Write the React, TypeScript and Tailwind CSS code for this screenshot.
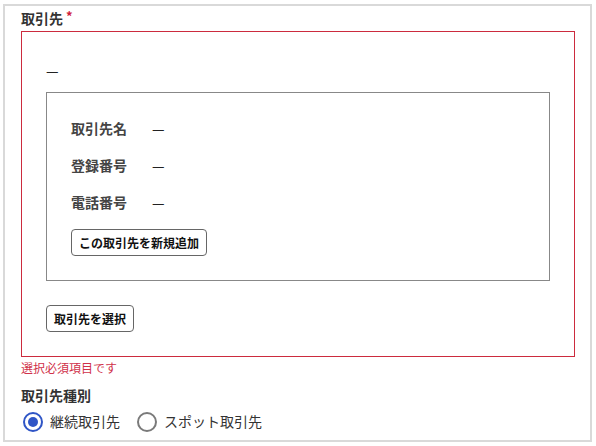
import React from 'react';

const Row: React.FC<{ label: string }> = ({ label }) => (
  <div className="flex h-5 items-center">
    <span className="w-[81px] text-[14px] font-bold text-[#444]">{label}</span>
    <span className="text-[14px] text-[#222]">—</span>
  </div>
);

const Radio: React.FC<{ checked?: boolean; label: string }> = ({ checked, label }) => (
  <label className="flex items-center gap-[7px]">
    {checked ? (
      <span className="flex h-5 w-5 items-center justify-center rounded-full border-2 border-[#2f55c6]">
        <span className="h-[10px] w-[10px] rounded-full bg-[#2f55c6]" />
      </span>
    ) : (
      <span className="h-5 w-5 rounded-full border-2 border-[#7a7a7a]" />
    )}
    <span className="text-[14px] text-[#333]">{label}</span>
  </label>
);

export default function App() {
  return (
    <div
      className="h-[446px] w-[596px] bg-white pl-[3px] pt-[4px]"
      style={{ fontFamily: '"Noto Sans CJK JP", "Noto Sans", sans-serif' }}
    >
      <div className="h-[438px] w-[589px] border-2 border-[#d9d9d9] pl-4 pt-[2px]">
        <div className="flex h-5 items-center gap-[3px]">
          <span className="text-[14px] font-bold leading-5 text-[#333]">取引先</span>
          <span className="-mt-[4px] text-[13px] font-bold text-[#d0213a]">*</span>
        </div>

        <div className="mt-[3px] w-[554px] border border-[#cc2b3e] px-6 pb-6 pt-[28px]">
          <div className="h-5 text-[14px] leading-5 text-[#222]">—</div>

          <div className="mt-[12px] border border-[#888] pb-6 pl-6 pt-[25px]">
            <div className="flex flex-col gap-[17px]">
              <Row label="取引先名" />
              <Row label="登録番号" />
              <Row label="電話番号" />
            </div>
            <button className="mt-[17px] h-[27px] rounded border border-[#666] px-[7px] text-[12px] font-bold text-[#111]">
              この取引先を新規追加
            </button>
          </div>

          <button className="mt-6 h-[27px] rounded border border-[#666] px-[7px] text-[12px] font-bold text-[#111]">
            取引先を選択
          </button>
        </div>

        <div className="mt-[3px] h-4 text-[12px] leading-4 text-[#d0314a]">選択必須項目です</div>

        <div className="mt-[9px] h-5 text-[14px] font-bold leading-5 text-[#333]">取引先種別</div>

        <div className="mt-[6px] flex items-center gap-[17px] pl-[2px]">
          <Radio checked label="継続取引先" />
          <Radio label="スポット取引先" />
        </div>
      </div>
    </div>
  );
}
